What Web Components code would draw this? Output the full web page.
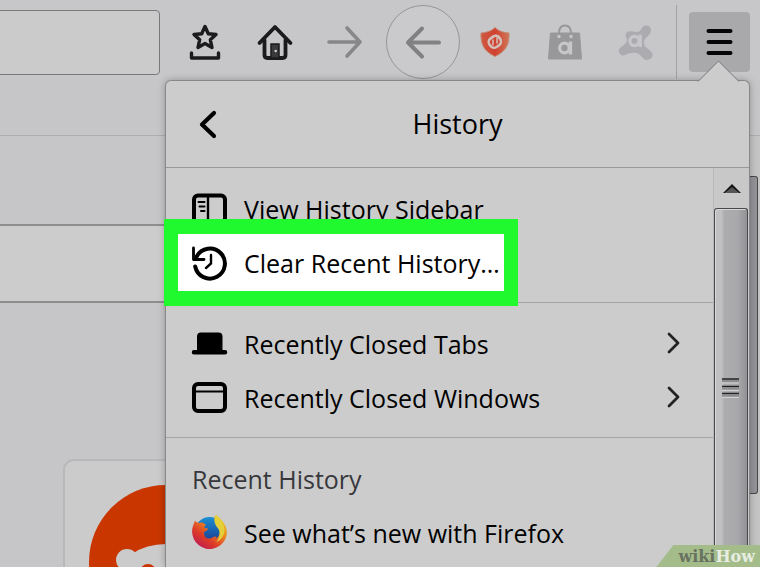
<!DOCTYPE html>
<html lang="en">
<head>
<meta charset="utf-8">
<title>History menu</title>
<style>
html,body{margin:0;height:100%}
body{font-family:"Open Sans","Noto Sans",sans-serif;background:#c6c6c8;color:#000;overflow:hidden}
</style>
</head>
<body>
<browser-window></browser-window>
<script>
const define=(name,html)=>customElements.define(name,class extends HTMLElement{
  constructor(){super();const t=document.createElement('template');t.innerHTML=html;
    this.attachShadow({mode:'open'}).append(t.content.cloneNode(true));}
});

const icons={
star:`<g fill="none" stroke="#1b1b1d" stroke-width="3.4" stroke-linejoin="round" stroke-linecap="round"><path d="M18 2.500l3.300 7.200 7.700.8-5.700 5.200 1.700 7.800-7-4-7 4 1.700-7.800L7 10.500l7.700-.8z"/><path d="M4.500 29v5h27v-5"/></g>`,
home:`<g fill="none" stroke="#1b1b1d" stroke-width="3.800" stroke-linejoin="round" stroke-linecap="round"><path d="M2.500 19L18 3l15.500 16"/><path d="M7.500 16v15q0 3 3 3h15q3 0 3-3V16"/></g><path d="M14 34V20h8v14z" fill="#3a3a3c" stroke="#1b1b1d" stroke-width="1.500"/><circle cx="18.700" cy="27" r="1.300" fill="#ccc"/>`,
forward:`<path d="M2 18h31M20 4l13 14L20 32" fill="none" stroke="#87878a" stroke-width="3.600" stroke-linecap="round" stroke-linejoin="round"/>`,
back:`<path d="M34 18.500H3M17 4.500L3 18.500l14 14" fill="none" stroke="#818184" stroke-width="4" stroke-linecap="round" stroke-linejoin="round"/>`,
shield:`<defs><linearGradient id="g" x2="1"><stop stop-color="#cf5a44"/><stop offset=".5" stop-color="#d0402f"/><stop offset="1" stop-color="#d07656"/></linearGradient></defs><path d="M18 3.500c4 4 9 5 14 5.500.500 10-2 18-14 23.500C6 27 3.500 19 4 9c5-.5 10-1.500 14-5.500z" fill="url(#g)" stroke="#c58a74" stroke-width="1"/><g fill="none" stroke="#d3c0ba" stroke-width="2.600" transform="rotate(-35 18 18)"><rect x="12" y="12.500" width="12" height="10.500" rx="4.500"/></g><path d="M16 15.500v6M20 13.500v6" stroke="#d3c0ba" stroke-width="1.500"/>`,
bag:`<path d="M3.500 9h29L34.500 35H1.500z" fill="#98989a" stroke="#98989a" stroke-linejoin="round"/><path d="M12 14V9q0-7.500 6-7.500T24 9v5" fill="none" stroke="#98989a" stroke-width="2"/><g fill="#c7c7c9"><circle cx="12" cy="12.500" r="1.700"/><circle cx="24" cy="12.500" r="1.700"/></g><g fill="none" stroke="#c7c7c9" stroke-width="3.300"><circle cx="17.500" cy="24" r="4.800"/><path d="M23.500 17.500v13"/></g>`,
avast:`<path d="M10 8c4-1.500 7 0 10 0 5 0 4-6.500 9-6.500 6 0 6 6.500 3 9.500-3 3-5 4-5 8 0 6 8.500 6 8.500 12 0 5-7.500 7-10.500 2-3-4-6-5-11-4-5 0-7 5-11 1-4-5 3-8 6-11 3-4-3-8 1-11z" fill="#acacb0"/><g fill="none" stroke="#c7c7c9" stroke-width="3.200"><circle cx="17.500" cy="17" r="4.600"/><path d="M23.300 10.500v12.500"/></g>`,
menu:`<path d="M6.500 7h22M6.500 18h22M6.500 29h22" stroke="#050505" stroke-width="4" stroke-linecap="round"/>`,
prev:`<path d="M23 7L11 18.500 23 30" fill="none" stroke="#000" stroke-width="4.200" stroke-linecap="round" stroke-linejoin="round"/>`,
chevron:`<path d="M14 8l9 9-9 9" fill="none" stroke="#222" stroke-width="2.800" stroke-linecap="round" stroke-linejoin="round"/>`,
sidebar:`<rect x="2" y="4.500" width="31" height="28" rx="4" fill="none" stroke="#000" stroke-width="4"/><path d="M16 4v28" stroke="#000" stroke-width="2.400"/><path d="M6.500 11h6M7.500 15.500h5M9 20h3.500" stroke="#000" stroke-width="2" stroke-linecap="round"/>`,
history:`<path d="M4.700 11.500A15 15 0 1 1 3.200 21.500" fill="none" stroke="#000" stroke-width="4" stroke-linecap="round"/><path d="M1.500 3v11.500H12" fill="none" stroke="#000" stroke-width="2.800" stroke-linecap="round" stroke-linejoin="round"/><path d="M19 10v8.500l-5 4.500" fill="none" stroke="#000" stroke-width="2.400" stroke-linecap="round"/>`,
hat:`<path d="M5 24V10.500q0-4 4-4h17.500q4 0 4 4V24H33a2.200 2.200 0 0 1 0 4.500H2A2.200 2.200 0 0 1 2 24z" fill="#000"/>`,
window:`<rect x="2" y="4" width="31" height="27" rx="4" fill="none" stroke="#000" stroke-width="4"/><path d="M3 11.500h30" stroke="#000" stroke-width="2"/>`,
firefox:`<defs><linearGradient id="f" x1=".9" y1="0" x2=".2" y2=".9"><stop stop-color="#e9d72f"/><stop offset=".4" stop-color="#eb8b1e"/><stop offset=".75" stop-color="#dc3928"/><stop offset="1" stop-color="#c3204e"/></linearGradient><linearGradient id="b" x2="0" y2="1"><stop stop-color="#1b8fd2"/><stop offset="1" stop-color="#1a2f86"/></linearGradient></defs><g transform="translate(-.5 -.5)"><circle cx="18" cy="17" r="14.500" fill="url(#b)"/><path d="M3.500 6c1 1.500 2 2 4 2.500 3-1 5 0 7 2-2 1-1.500 2-1.500 3l3.500.5c0 2-3 2.500-4 4 0 4 2 6 5.500 6 2.500 0 3.500-2 6-2 1.500 0 1 2-1 3 5-2 7-8 4-13-2-3-4.500-5-4-10l2-1.500c3 3 10.500 9 10.500 18A17.500 17.500 0 1 1 2 10z" fill="url(#f)"/><path d="M24.500.5c4 3 8.500 8 8.500 15 0 6-4 10-8 12 3-4 4-9 2-13-2-3-4.500-5-4-10z" fill="#e5cf38"/></g>`
};
customElements.define('ui-icon',class extends HTMLElement{
  constructor(){super();this.attachShadow({mode:'open'});}
  connectedCallback(){this.shadowRoot.innerHTML=`<style>:host{display:block;width:36px;height:36px;flex:none}svg{display:block;overflow:visible}</style><svg width="36" height="36" viewBox="0 0 36 36" aria-hidden="true">${icons[this.getAttribute('name')]}</svg>`;}
});

define('tool-button',`<style>
:host{display:block;flex:none;width:70px}
button{display:grid;place-items:center;width:100%;height:60px;margin:0;padding:0;border:0;background:none;box-sizing:border-box}
:host([round]){width:74px;margin-left:6px}
:host([round]) button{height:74px;border:1px solid #969698;border-radius:50%;background:#cacacc}
:host([active]){width:61px}
:host([active]) button{background:#a9a9ab;border-radius:4px}
</style><button><slot></slot></button>`);

define('nav-toolbar',`<style>
:host{display:flex;align-items:center;height:80px;padding:4px 10px 0 0;box-sizing:border-box;background:#c7c7c9}
input{flex:1;min-width:0;height:65px;margin:0 10px 0 -4px;box-sizing:border-box;border:1px solid #79797b;border-radius:4px;background:#cbcbcb;outline:0}
i{width:1px;height:74px;margin:0 12px 0 6px;background:#a2a2a4}
</style>
<input type="text" aria-label="Address">
<tool-button><ui-icon name="star"></ui-icon></tool-button>
<tool-button><ui-icon name="home"></ui-icon></tool-button>
<tool-button><ui-icon name="forward"></ui-icon></tool-button>
<tool-button round><ui-icon name="back"></ui-icon></tool-button>
<tool-button><ui-icon name="shield"></ui-icon></tool-button>
<tool-button><ui-icon name="bag"></ui-icon></tool-button>
<tool-button><ui-icon name="avast"></ui-icon></tool-button>
<i></i>
<tool-button active><ui-icon name="menu"></ui-icon></tool-button>`);

define('page-content',`<style>
:host{display:block}
.bookmarks{height:55px;border-bottom:1px solid #aeaeb0}
.search{display:block;width:100%;height:79px;margin:88px 0 156px;padding:0;box-sizing:border-box;border:solid #8e8e90;border-width:2px 0;background:#ccc;border-radius:0;outline:0}
.card{margin-left:63px;width:204px;height:204px;box-sizing:border-box;border:2px solid #b8b8ba;border-radius:11px;background:#cbcbcb;padding:24px}
svg{display:block}
</style>
<div class="bookmarks"></div>
<input class="search" type="text" aria-label="Search">
<div class="card"><svg width="154" height="154" viewBox="0 0 154 154"><circle cx="77" cy="77" r="77" fill="#c93600"/><g fill="#cbcbcb"><circle cx="38" cy="75" r="11"/><circle cx="116" cy="75" r="11"/><ellipse cx="77" cy="93" rx="48" ry="34"/></g><circle cx="59" cy="87" r="8" fill="#c93600"/></svg></div>`);

define('menu-row',`<style>
:host{display:block;position:relative}
button{position:relative;display:flex;align-items:center;gap:16px;width:100%;height:54px;margin:0;padding:0 22px 0 26px;border:0;background:none;color:#000;font:inherit;text-align:left}
.label{flex:1;white-space:nowrap}
:host([highlight]){z-index:1}
:host([highlight])::before{content:"";position:absolute;left:-2px;top:-17px;width:354px;height:87px;box-sizing:border-box;border:15px solid #20f92e;border-width:15px 14px;background:#fff}
</style><button><slot name="icon"></slot><span class="label"><slot></slot></span><slot name="end"></slot></button>`);

define('menu-section',`<style>
:host{display:block;padding:14px 0 12px;border-bottom:1px solid #a4a4a4}
</style><slot name="title"></slot><slot></slot>`);

define('menu-scrollbar',`<style>
:host{display:flex;flex-direction:column;width:36px;flex:none;background:#c8c8c8;border-left:1px solid #b8b8b8;box-sizing:border-box}
.up{display:grid;place-items:center;height:40px}
.thumb{flex:1;display:grid;place-items:center;margin-right:1px;border:1px solid #48484a;border-bottom:0;border-radius:3px 3px 0 0;box-shadow:inset 1px 1px #d8d8da;background:linear-gradient(90deg,#c0c0c2 20%,#acacaf 30%,#a9a9ac 70%,#929296)}
svg{display:block}
</style>
<div class="up"><svg width="18" height="10"><path d="M0 10L9 1l9 9-2 0-7-5-7 5z" fill="#111"/><path d="M2 10l7-6 7 6z" fill="#555"/></svg></div>
<div class="thumb"><svg width="18" height="22"><path d="M0 2h17M0 9.500h17M0 16.500h17" stroke="#222" stroke-width="1.500"/><path d="M0 4h17M0 11.500h17M0 18.500h17" stroke="#8c8c8f" stroke-width="2"/><path d="M0 6h17M0 13.500h17M0 20.500h17" stroke="#d0d0d2"/></svg></div>`);

define('history-panel',`<style>
:host{display:flex;flex-direction:column;box-sizing:border-box;border:1px solid #88888a;border-bottom:0;border-radius:6px 6px 0 0;background:#ccc;box-shadow:0 0 7px #0004;font-size:25px}
.tip{position:absolute;right:9px;top:-21px}
header{display:grid;grid-template-columns:86px 1fr 86px;align-items:center;height:86px;border-bottom:1px solid #999;text-align:center}
header button{display:grid;place-items:center;width:86px;height:60px;margin:0;padding:0;border:0;background:none}
h1{margin:0;font:inherit;font-size:27px;line-height:40px}
.body{display:flex;flex:1;min-height:0}
.list{flex:1;min-width:0}
h2{margin:0;padding-left:26px;font:inherit;line-height:54px;color:#38383c}
.last{border:0}
</style>
<svg class="tip" width="43" height="22"><path d="M1 21.500L21.500 1 42 21.500" fill="#ccc" stroke="#77777a"/></svg>
<header><button aria-label="Back"><ui-icon name="prev"></ui-icon></button><h1>History</h1></header>
<div class="body"><div class="list">
<menu-section>
<menu-row><ui-icon slot="icon" name="sidebar"></ui-icon>View History Sidebar</menu-row>
<menu-row highlight><ui-icon slot="icon" name="history"></ui-icon>Clear Recent History…</menu-row>
</menu-section>
<menu-section>
<menu-row><ui-icon slot="icon" name="hat"></ui-icon>Recently Closed Tabs<ui-icon slot="end" name="chevron"></ui-icon></menu-row>
<menu-row><ui-icon slot="icon" name="window"></ui-icon>Recently Closed Windows<ui-icon slot="end" name="chevron"></ui-icon></menu-row>
</menu-section>
<menu-section class="last"><h2 slot="title">Recent History</h2>
<menu-row><ui-icon slot="icon" name="firefox"></ui-icon>See what’s new with Firefox</menu-row>
</menu-section>
</div><menu-scrollbar></menu-scrollbar></div>`);

define('wiki-mark',`<style>
:host{display:block;padding:1px 5px 0 22px;background:#a3bc8a;clip-path:polygon(17px 0,100% 0,100% 100%,0 100%);font:bold 16px/21px "DejaVu Serif",serif;color:#e8ede2}
span{color:#697260}
</style><span>wiki</span>How`);

define('browser-window',`<style>
:host{display:block;position:relative;height:100%;overflow:hidden}
history-panel{position:absolute;left:165px;right:10px;top:80px;bottom:0}
wiki-mark{position:absolute;right:0;bottom:0;z-index:3}
.pagebar{position:absolute;right:0;top:136px;bottom:0;width:10px;background:#c4c4c4}
.pagebar::before{content:"";display:block;height:318px;margin:40px 2px 0 0;box-sizing:border-box;border:1px solid #48484a;border-left:0;border-radius:0 3px 3px 0;background:#939398}
</style>
<nav-toolbar></nav-toolbar><page-content></page-content>
<div class="pagebar"></div><history-panel></history-panel><wiki-mark></wiki-mark>`);
</script>
</body>
</html>
